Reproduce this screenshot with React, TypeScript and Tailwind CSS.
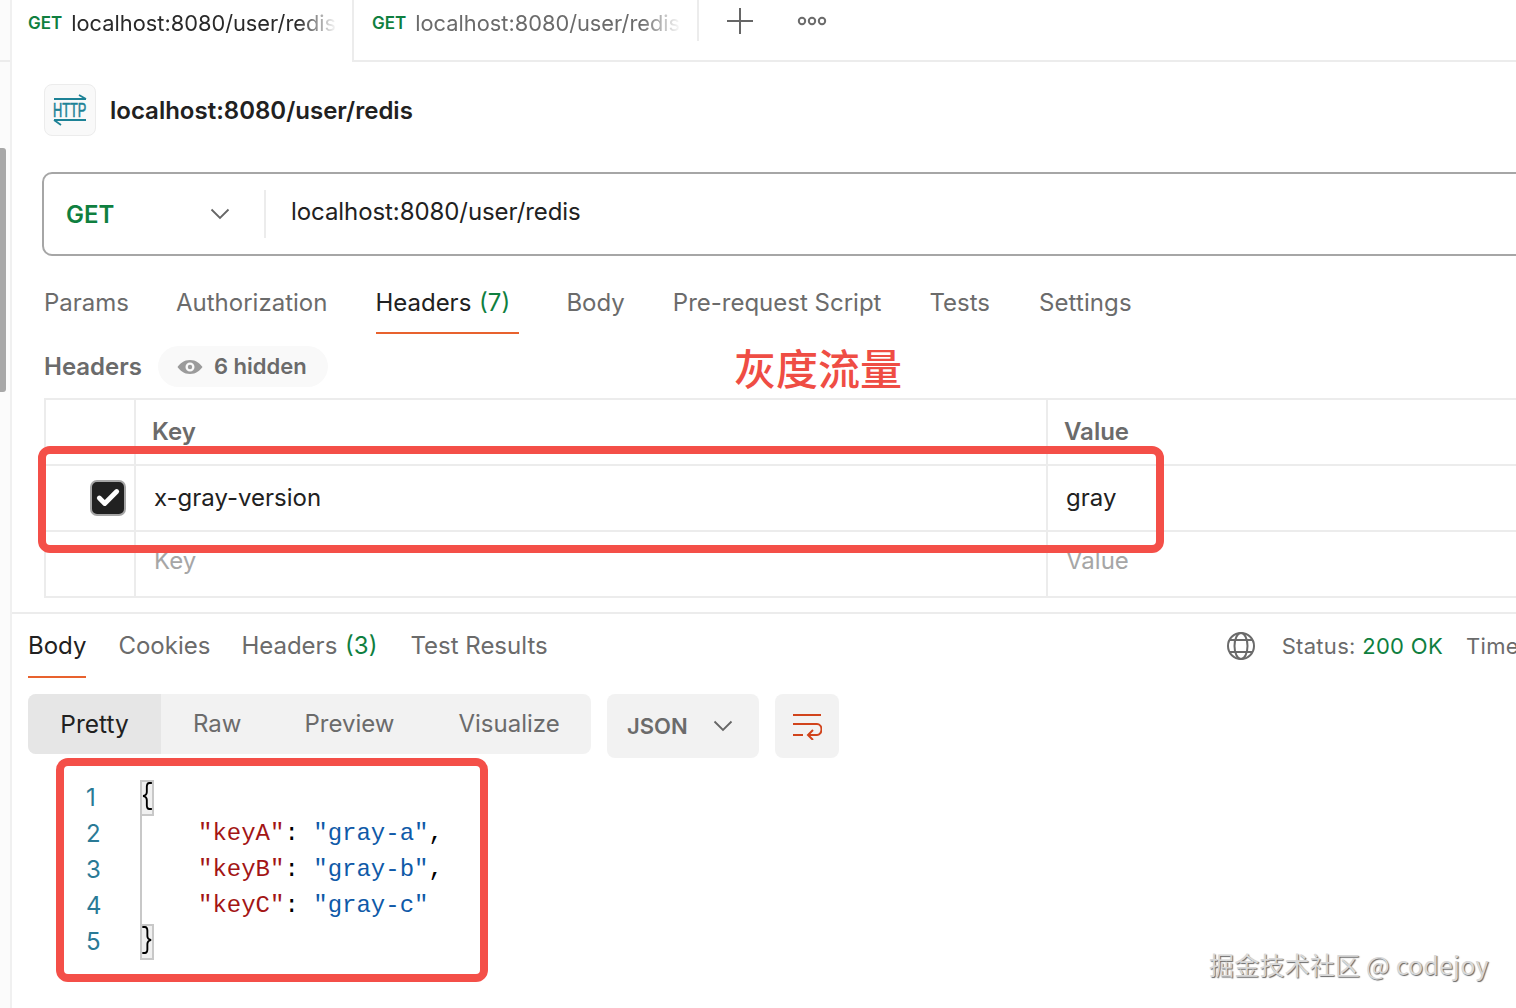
import { Check } from 'lucide-react';

const sans = 'font-["Inter","Noto_Sans",sans-serif]';

const HttpIcon = () => (
  <svg width="36" height="34" viewBox="0 0 36 34" fill="none" stroke="#1d8296" strokeWidth="1.8" className="overflow-visible">
    <path d="M2 6h32M27 2l7 4" />
    <path d="M2 27h32M9 32l-7-5" />
    <text transform="translate(1 24) scale(0.64 1)" fontFamily="Liberation Sans" fontSize="20" fill="#1d8296" stroke="#1d8296" strokeWidth="0.6">
      HTTP
    </text>
  </svg>
);

const EyeIcon = () => (
  <svg width="26" height="16" viewBox="0 0 26 16">
    <path fillRule="evenodd" fill="#9b9b9b" d="M13 1c6 0 10 3.600 12.500 7C23 11.400 19 15 13 15S3 11.400.5 8C3 4.600 7 1 13 1Zm0 2.500a4.500 4.500 0 1 0 0 9 4.500 4.500 0 0 0 0-9Z" />
    <circle cx="13" cy="8" r="2.200" fill="#9b9b9b" />
  </svg>
);

const GlobeIcon = () => (
  <svg width="30" height="30" viewBox="0 0 30 30" fill="none" stroke="#6b6b6b" strokeWidth="2">
    <circle cx="15" cy="15" r="13" />
    <ellipse cx="15" cy="15" rx="6.500" ry="13" />
    <path d="M4 9h22M4 21h22" />
  </svg>
);

const WrapIcon = () => (
  <svg width="30" height="28" viewBox="0 0 30 28" fill="none" stroke="#d1441c" strokeWidth="2">
    <path d="M1 3h28M1 12h24a4.500 5.500 0 0 1 0 11h-9M1 23h10" />
    <path d="M21 18l-5 5 5 5" />
  </svg>
);

const Chevron = () => (
  <svg width="20" height="12" viewBox="0 0 20 12" fill="none" stroke="#666" strokeWidth="1.800">
    <path d="M1.500 1.500 10 10l8.500-8.500" />
  </svg>
);

const Tab = ({ active }: { active?: boolean }) => (
  <div className={`flex items-start gap-[9px] pt-[11px] ${active ? 'relative h-[62px] w-[342px] border-r-2 border-[#ececec] bg-white pl-[16px]' : 'h-[41px] w-[345px] border-r-2 border-[#ececec] pl-[18px]'}`}>
    <span className="text-[17px] leading-[24px] font-semibold text-[#0f7f3f]">GET</span>
    <span className={`-mt-[1px] w-[266px] overflow-hidden whitespace-nowrap text-[21.800px] leading-[26px] [mask-image:linear-gradient(to_right,black_85%,transparent_100%)] ${active ? 'text-[#2a2a2a]' : 'text-[#6b6b6b]'}`}>
      localhost:8080/user/redis
    </span>
  </div>
);

const TableRow = ({ k, v, muted, checked, bold }: { k: string; v: string; muted?: boolean; checked?: boolean; bold?: boolean }) => {
  const tone = bold ? 'font-semibold text-[#6b6b6b] pl-[16px] items-end pb-[17px]' : muted ? 'text-[#a6a6a6] pl-[18px] items-start pt-[14px]' : 'text-[#212121] pl-[18px] items-center';
  return (
    <div className="grid h-[66px] grid-cols-[90px_912px_1fr] border-b-2 border-[#ececec]">
      <div className="flex items-center justify-end border-r-2 border-[#ececec] pr-[8px]">
        {checked && (
          <span className="flex h-[36px] w-[36px] items-center justify-center rounded-[7px] border-2 border-[#a6a6a6] bg-[#212121]">
            <Check size={26} strokeWidth={4.5} className="text-white" />
          </span>
        )}
      </div>
      <div className={`flex border-r-2 border-[#ececec] text-[24px] leading-[30px] ${tone}`}>{k}</div>
      <div className={`flex text-[24px] leading-[30px] ${tone}`}>{v}</div>
    </div>
  );
};

const code: [string, string, string][] = [
  ['"keyA"', '"gray-a"', ','],
  ['"keyB"', '"gray-b"', ','],
  ['"keyC"', '"gray-c"', ''],
];

export default function App() {
  return (
    <div className={`relative flex h-[1008px] w-[1516px] overflow-hidden bg-white ${sans}`}>
      {/* sidebar strip */}
      <div className="flex w-[12px] shrink-0 flex-col border-r-2 border-[#f0f0f0] bg-[#fbfbfb]">
        <div className="h-[62px] border-b-2 border-[#ececec]" />
        <div className="mt-[86px] h-[244px] w-[6px] rounded-r-[3px] bg-[#a8a8a8]" />
      </div>

      <div className="min-w-0 flex-1">
        {/* tab bar */}
        <div className="flex h-[62px] items-start border-b-2 border-[#ececec]">
          <Tab active />
          <Tab />
          <svg width="26" height="26" viewBox="0 0 26 26" stroke="#666" strokeWidth="2" className="ml-[28px] mt-[8px]">
            <path d="M13 0v26M0 13h26" />
          </svg>
          <svg width="30" height="10" viewBox="0 0 30 10" fill="none" stroke="#6b6b6b" strokeWidth="2" className="ml-[44px] mt-[16px]">
            <circle cx="5" cy="5" r="3.200" />
            <circle cx="15" cy="5" r="3.200" />
            <circle cx="25" cy="5" r="3.200" />
          </svg>
        </div>

        {/* request title */}
        <div className="ml-[32px] mt-[22px] flex items-center gap-[14px]">
          <div className="flex h-[52px] w-[52px] items-center justify-center rounded-[8px] border border-[#ececec] bg-[#f9f9f9]">
            <HttpIcon />
          </div>
          <span className="pt-[2px] text-[24px] font-semibold text-[#212121]">localhost:8080/user/redis</span>
        </div>

        {/* url bar */}
        <div className="ml-[30px] mt-[36px] flex h-[84px] w-[1600px] items-center rounded-[10px] border-2 border-[#a6a6a6]">
          <span className="ml-[22px] mt-[2px] w-[144px] text-[24px] font-semibold text-[#0f7f3f]">GET</span>
          <Chevron />
          <div className="ml-[34px] h-[48px] w-[2px] bg-[#ececec]" />
          <span className="ml-[25px] -mt-[4px] text-[24px] tracking-[-0.08px] text-[#212121]">localhost:8080/user/redis</span>
        </div>

        {/* request tabs */}
        <div className="ml-[32px] mt-[26px] flex h-[52px] gap-[48px] text-[24px] text-[#6b6b6b]">
          <span className="pt-[3px]">Params</span>
          <span className="-ml-[1px] pt-[3px] pr-[1px]">Authorization</span>
          <span className="w-[143px] whitespace-pre border-b-2 border-[#e8622e] pt-[3px] text-[#212121]">
            <span className="-ml-[1px]">Headers</span> <span className="ml-[1px] text-[#0f7f3f]">(7)</span>
          </span>
          <span className="-ml-[1px] pt-[3px]">Body</span>
          <span className="pt-[3px]">Pre-request Script</span>
          <span className="pt-[3px]">Tests</span>
          <span className="ml-[1px] pt-[3px] tracking-[0.1px]">Settings</span>
        </div>

        {/* headers label */}
        <div className="ml-[32px] mt-[12px] flex h-[41px] items-center gap-[16px]">
          <span className="text-[24px] font-semibold text-[#6b6b6b]">Headers</span>
          <div className="flex h-[41px] w-[170px] items-center gap-[11px] rounded-full bg-[#f9f9f9] pl-[19px] text-[22px] font-semibold text-[#6b6b6b]">
            <EyeIcon />
            <span>6 hidden</span>
          </div>
        </div>

        {/* header table */}
        <div className="ml-[32px] mt-[11px] border-t-2 border-l-2 border-[#ececec]">
          <TableRow k="Key" v="Value" bold />
          <TableRow k="x-gray-version" v="gray" checked />
          <TableRow k="Key" v="Value" muted />
        </div>

        {/* response */}
        <div className="mt-[14px] border-t-2 border-[#ececec]">
          <div className="flex h-[64px] items-start whitespace-pre pl-[16px] text-[24px] leading-[34px] text-[#6b6b6b]">
            <span className="h-[64px] border-b-2 border-[#e8622e] pt-[15px] text-[#212121]">Body</span>
            <span className="ml-[32px] pt-[15px]">Cookies</span>
            <span className="ml-[31px] pt-[15px]">
              Headers <span className="ml-[1px] text-[#0f7f3f]">(3)</span>
            </span>
            <span className="ml-[33px] pt-[15px]">Test Results</span>
            <div className="ml-[678px] mt-[17px] shrink-0">
              <GlobeIcon />
            </div>
            <span className="ml-[26px] pt-[15px] text-[22px] tracking-[0.3px]">
              Status: <span className="text-[#0f7f3f]">200 OK</span>
            </span>
            <span className="ml-[23px] pt-[15px] text-[22px] tracking-[0.3px]">Time</span>
          </div>

          <div className="ml-[16px] mt-[16px] flex items-start">
            <div className="flex h-[60px] w-[563px] items-center rounded-[8px] bg-[#f2f2f2] text-[24px] text-[#6b6b6b]">
              <span className="flex h-full w-[133px] items-center justify-center rounded-l-[8px] bg-[#e6e6e6] text-[24.500px] text-[#212121]">Pretty</span>
              <span className="ml-[32px]">Raw</span>
              <span className="ml-[63px]">Preview</span>
              <span className="ml-[64px]">Visualize</span>
            </div>
            <div className="ml-[16px] flex h-[64px] w-[152px] items-center rounded-[8px] bg-[#f2f2f2] pl-[20px] text-[22px] font-semibold text-[#6b6b6b]">
              JSON
              <span className="ml-[25px]">
                <Chevron />
              </span>
            </div>
            <div className="ml-[16px] flex h-[64px] w-[64px] items-center justify-center rounded-[8px] bg-[#f2f2f2]">
              <WrapIcon />
            </div>
          </div>

          {/* code */}
          <div className='ml-[74px] mt-[22px] font-["Liberation_Mono","DejaVu_Sans_Mono",monospace] text-[24px] leading-[36px]'>
            <CodeRow n={1}>
              <Brace ch="{" />
            </CodeRow>
            {code.map(([k, v, c], i) => (
              <CodeRow key={k} n={i + 2}>
                <span className="ml-[56px] whitespace-pre">
                  <span className="text-[#a31515]">{k}</span>
                  <span className="text-black">: </span>
                  <span className="text-[#0f5aa8]">{v}</span>
                  <span className="text-black">{c}</span>
                </span>
              </CodeRow>
            ))}
            <CodeRow n={5}>
              <Brace ch="}" />
            </CodeRow>
          </div>
        </div>
      </div>

      {/* annotations */}
      <span className='absolute left-[734px] top-[337px] font-["Noto_Sans_CJK_SC",sans-serif] text-[42px] leading-[60px] font-medium text-[#ef4d44]'>灰度流量</span>
      <div className="absolute left-[38px] top-[446px] h-[107px] w-[1126px] rounded-[12px] border-[8px] border-[#f44f48]" />
      <div className="absolute left-[56px] top-[758px] h-[224px] w-[432px] rounded-[12px] border-[8px] border-[#f44f48]" />
      <span className='absolute left-[1209px] top-[946px] whitespace-nowrap font-["Noto_Sans_CJK_SC",sans-serif] text-[25px] leading-[36px] tracking-[0.2px] text-[#d8d8d8] [text-shadow:1px_1px_1px_#666]'>
        掘金技术社区 @ codejoy
      </span>
    </div>
  );
}

function CodeRow({ n, children }: { n: number; children: React.ReactNode }) {
  return (
    <div className="flex h-[36px] items-center">
      <span className={`w-[54px] shrink-0 ${sans} text-[#2a7a96]`}>{n}</span>
      <div className={`h-full w-[2px] ${n === 1 || n === 5 ? '' : 'bg-[#c8c8c8]'}`} />
      {children}
    </div>
  );
}

function Brace({ ch }: { ch: string }) {
  return (
    <span className="-ml-[2px] flex h-[36px] w-[14px] items-center justify-center border-2 border-[#c8c8c8] bg-[#f0f0f0] text-[22px] text-black">
      <span className="inline-block scale-y-[1.3]">{ch}</span>
    </span>
  );
}
